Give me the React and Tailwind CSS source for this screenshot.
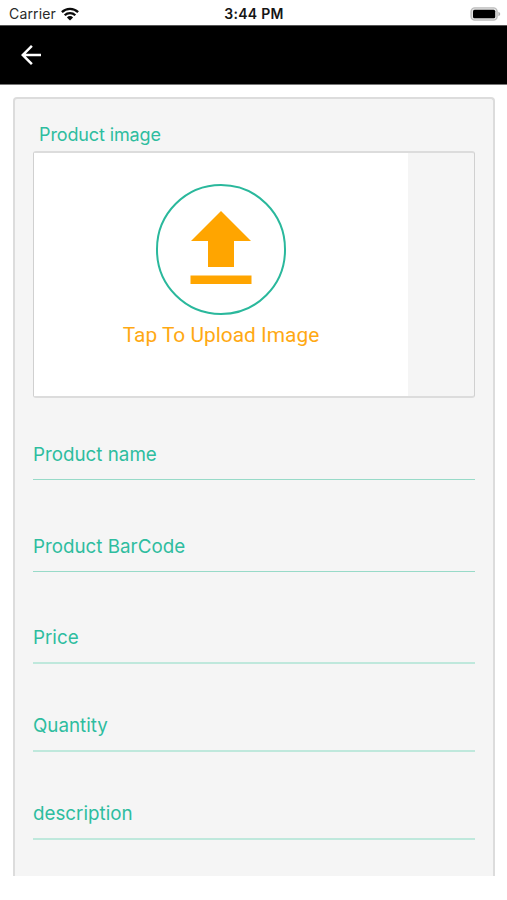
import React from "react";

const fields = [
  { name: "productName", label: "Product name", className: "h-[82px] border-b border-b-[#98dac8]" },
  { name: "barCode", label: "Product BarCode", className: "h-[92px] border-b border-b-[#98dac8]" },
  { name: "price", label: "Price", className: "h-[92px] border-b-2 border-b-[#bfe8dc]" },
  { name: "quantity", label: "Quantity", className: "h-[88px] border-b-2 border-b-[#bfe8dc]" },
  { name: "description", label: "description", className: "h-[88px] border-b-2 border-b-[#bfe8dc]" },
];

function WifiIcon() {
  return (
    <svg width="18" height="14" viewBox="0 0 18 14" fill="none" stroke="#0b0b0b" strokeWidth="2.3">
      <path d="M0.9 5.1a11.6 11.6 0 0 1 16.2 0" />
      <path d="M3.7 8.2a7.6 7.6 0 0 1 10.6 0" />
      <path d="M9 13.6 5.9 10.4a4.4 4.4 0 0 1 6.2 0z" fill="#0b0b0b" stroke="none" />
    </svg>
  );
}

function BatteryIcon() {
  return (
    <svg width="31" height="14" viewBox="0 0 31 14">
      <rect x="1.1" y="0.9" width="26" height="12.2" rx="3.6" fill="#e4e4e4" stroke="#bcbcbc" strokeWidth="1.4" />
      <rect x="3" y="2.7" width="22.2" height="8.6" rx="1.6" fill="#000" />
      <path d="M28.4 4.8c2.4.9 2.4 3.6 0 4.5z" fill="#b0b0b0" />
    </svg>
  );
}

function StatusBar() {
  return (
    <div className="grid h-[25px] grid-cols-3 items-center pt-[2px] pl-[9px] pr-[6px]">
      <div className="flex items-center gap-[5px] text-[14px] tracking-[0.15px] text-[#2a2a2a]">
        <span>Carrier</span>
        <WifiIcon />
      </div>
      <div className="pr-[2px] text-center text-[14px] font-semibold tracking-[0.3px] text-[#151515]">3:44 PM</div>
      <div className="flex justify-end">
        <BatteryIcon />
      </div>
    </div>
  );
}

function Header() {
  return (
    <header className="flex h-[60px] items-center border-y border-t-[#555] border-b-[#777] bg-black pl-[15.5px]">
      <button aria-label="Back">
        <svg width="30" height="30" viewBox="0 0 24 24" fill="#fff">
          <path d="M20 11H7.83l5.59-5.59L12 4l-8 8 8 8 1.41-1.41L7.83 13H20v-2z" />
        </svg>
      </button>
    </header>
  );
}

function ImageUpload() {
  return (
    <div className="h-[247px] rounded-[3px] border-x border-y-2 border-x-[#d0d0d0] border-y-[#dcdcdc]">
      <button className="flex h-full w-[374px] flex-col items-center bg-white pt-[31px]">
        <div className="flex h-[131px] w-[130px] justify-center rounded-full border-2 border-[#2ab89c] pt-[25px]">
          <svg width="62" height="74" viewBox="0 0 62 74" className="shrink-0" fill="#ffa500">
            <path d="M31 0 61 30H44v26H18V30H1z" />
            <path d="M0.5 64.5h61V73h-61z" />
          </svg>
        </div>
        <span className="mt-[5px] font-[Roboto,sans-serif] text-[20.9px] leading-[30px] text-[#ffa913]">
          Tap To Upload Image
        </span>
      </button>
    </div>
  );
}

export default function App() {
  return (
    <div className="h-[900px] w-[507px] overflow-hidden bg-white font-[Inter,sans-serif]">
      <StatusBar />
      <Header />
      <main className="px-3 pt-3 pl-[13px]">
        <div className="h-[779px] rounded-t-[4px] border-2 border-b-0 border-[#dcdcdc] bg-[#f5f5f5] px-[18px] pt-[22px]">
          <div className="h-[30px] pl-[6px] text-[18px] leading-[27px] tracking-[-0.12px] text-[#2ebd9f]">
            Product image
          </div>
          <ImageUpload />
          {fields.map((f) => (
            <div
              key={f.name}
              className={`flex flex-col justify-end pb-2 text-[18.8px] leading-[32px] text-[#2ebd9f] ${f.className}`}
            >
              {f.label}
            </div>
          ))}
        </div>
      </main>
    </div>
  );
}
